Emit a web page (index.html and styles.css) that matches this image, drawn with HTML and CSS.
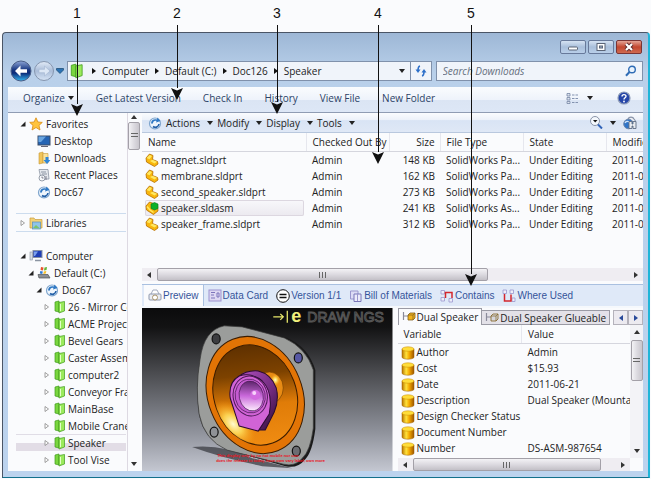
FILE: index.html
```html
<!DOCTYPE html>
<html lang="en">
<head>
<meta charset="utf-8">
<meta name="viewport" content="width=device-width, initial-scale=1">
<title>Speaker</title>
<link rel="stylesheet" href="styles.css">
</head>
<body>

<!-- shared icons -->
<svg class="sprite" aria-hidden="true">
  <defs>
    <linearGradient id="gold" x1="0" x2="1" y1="0" y2="0">
      <stop offset="0" stop-color="#b87400"/><stop offset=".35" stop-color="#ffe23c"/><stop offset=".6" stop-color="#f5a800"/><stop offset="1" stop-color="#9c5600"/>
    </linearGradient>
    <linearGradient id="back" x1="0" x2="0" y1="0" y2="1">
      <stop offset="0" stop-color="#8fa6d8"/><stop offset=".45" stop-color="#16357f"/><stop offset=".6" stop-color="#0b2a78"/><stop offset="1" stop-color="#35b6ef"/>
    </linearGradient>
    <linearGradient id="fwd" x1="0" x2="0" y1="0" y2="1">
      <stop offset="0" stop-color="#e2ebf7"/><stop offset=".5" stop-color="#a9bcd8"/><stop offset="1" stop-color="#d6e4f5"/>
    </linearGradient>
    <symbol id="part" viewBox="0 0 14 14">
      <path d="M1 5 4.500 1 8 2.500 7.500 6.500 12.500 8.500 13 11 9.500 13.500 1.500 9z" fill="#f9b70c" stroke="#b56d00" stroke-width=".8"/>
      <path d="M1.500 5 4.700 2 7 3 4.500 6.200zM5 8 7.500 6.800 12 8.800 9.500 10.500z" fill="#ffe861"/>
    </symbol>
    <symbol id="asm" viewBox="0 0 14 14">
      <path d="M1 5 4.500 1 12.500 4 13 10 8.500 13.500 1.500 9z" fill="#f9b70c" stroke="#b56d00" stroke-width=".8"/>
      <path d="M2 5.500 5 9 8.500 11.500" fill="none" stroke="#ffe861" stroke-width="1.500"/>
      <path d="M6 3 9.500 1.500 13 3V7.500L9.500 9 6 7.500z" fill="#0bb02a" stroke="#067a1c" stroke-width=".6"/>
    </symbol>
    <symbol id="folder" viewBox="0 0 12 14">
      <path d="M1 2 5 1V12L1 11z" fill="#79d63e" stroke="#3f9a1c" stroke-width=".7"/>
      <path d="M5 2.500 10.500 1.500V11L5 13z" fill="#9bea5c" stroke="#3f9a1c" stroke-width=".7"/>
      <path d="M6.500 4V11" stroke="#e2ffc8"/>
    </symbol>
    <symbol id="vault" viewBox="0 0 14 14">
      <circle cx="7" cy="7.500" r="5.500" fill="#eef5fc" stroke="#7fa5cd" stroke-width="1.200"/>
      <path d="M3 7.500C3 4 6 2.500 9 3.500L9.500 1.500 12.500 5 8 6.500 8.500 5C6.500 4.500 5 5.500 5 7.500z" fill="#2f78c4"/>
      <path d="M5 10.500C7 12 10.500 11.500 11 8" fill="none" stroke="#2460a8" stroke-width="1.600"/>
    </symbol>
    <symbol id="cyl" viewBox="0 0 14 14">
      <path d="M1 3V11.500C3 13.800 11 13.800 13 11.500V3z" fill="url(#gold)" stroke="#9c5c00" stroke-width=".5"/>
      <ellipse cx="7" cy="3" rx="6" ry="2.200" fill="#ffdd3a" stroke="#c98a00" stroke-width=".5"/>
    </symbol>
    <symbol id="open" viewBox="0 0 6 6"><path d="M5.500 .5V5.500H.5z" fill="#222"/></symbol>
    <symbol id="closed" viewBox="0 0 6 6"><path d="M1 .5 4.500 3 1 5.500z" fill="#fff" stroke="#888" stroke-width=".8"/></symbol>
    <symbol id="config" viewBox="0 0 14 12">
      <path d="M1.500 1V9M1.500 5H6" fill="none" stroke="#8a8a9a" stroke-width="1.200"/>
      <path d="M6 4 8 2H13V7L11 9H6z" fill="currentColor" stroke="#80601c" stroke-width=".8"/>
      <path d="M6 4H11V9M11 4 13 2" fill="none" stroke="#80601c" stroke-width=".7"/>
    </symbol>
  </defs>
</svg>

<div class="window">
  <header class="titlebar">
    <button type="button" class="win_button" aria-label="Minimize"><svg width="12" height="10" viewBox="0 0 12 10"><rect x="1.500" y="5" width="9" height="3" rx="1" fill="#fff" stroke="#5b6577"/></svg></button>
    <button type="button" class="win_button" aria-label="Maximize"><svg width="12" height="10" viewBox="0 0 12 10"><rect x="2" y="1.500" width="8" height="7" fill="#fff" stroke="#5b6577"/><rect x="4.500" y="4" width="3" height="2" fill="#9fb2cc" stroke="#5b6577"/></svg></button>
    <button type="button" class="win_button close" aria-label="Close"><svg width="12" height="10" viewBox="0 0 12 10"><path d="M3 2 9 8M9 2 3 8" stroke="#5e2a2a" stroke-width="4"/><path d="M3 2 9 8M9 2 3 8" stroke="#fff" stroke-width="2.200"/></svg></button>
  </header>

  <nav class="navbar">
    <div class="history">
      <button type="button" class="plain" aria-label="Back"><svg width="22" height="22" viewBox="0 0 22 22"><circle cx="11" cy="11" r="10" fill="url(#back)" stroke="#4a5d86"/><path d="M5 11 10.500 5.500V9.300H17V12.700H10.500V16.500z" fill="#fff"/></svg></button>
      <button type="button" class="plain" aria-label="Forward"><svg width="22" height="22" viewBox="0 0 22 22"><circle cx="11" cy="11" r="9.500" fill="url(#fwd)" stroke="#8595ae"/><path d="M17 11 11.500 6V9.300H6V12.700H11.500V16z" fill="#dce7f5" stroke="#a3b5d0" stroke-width=".6"/></svg></button>
      <button type="button" class="plain" aria-label="Recent locations"><svg width="8" height="6" viewBox="0 0 8 6"><path d="M.5 .5H7.500V2L4 5.500 .5 2z" fill="#2b72b4" stroke="#16456f" stroke-width=".7"/></svg></button>
    </div>
    <div class="address">
      <svg width="14" height="16"><use href="#folder"/></svg>
      <i class="crumb_arrow"></i><a href="#">Computer</a>
      <i class="crumb_arrow"></i><a href="#">Default (C:)</a>
      <i class="crumb_arrow"></i><a href="#">Doc126</a>
      <i class="crumb_arrow"></i><a href="#">Speaker</a>
      <i class="caret address_caret"></i>
      <button type="button" class="plain refresh" aria-label="Refresh"><svg width="12" height="12" viewBox="0 0 12 12"><path d="M5 1C3 1.500 3 3 3 5" fill="none" stroke="#2c6fc9" stroke-width="1.500"/><path d="M.5 4.500H5.500L3 8z" fill="#2c6fc9"/><path d="M7 11C9 10.500 9 9 9 7" fill="none" stroke="#2c6fc9" stroke-width="1.500"/><path d="M6.500 7.500H11.500L9 4z" fill="#2c6fc9"/></svg></button>
    </div>
    <div class="search">
      <input type="text" placeholder="Search Downloads" aria-label="Search Downloads">
      <svg width="12" height="12" viewBox="0 0 12 12"><circle cx="7" cy="4.500" r="3.300" fill="#e9f3fd" stroke="#2f6cb5" stroke-width="1.400"/><path d="M4.500 7 1 10.800" stroke="#2f6cb5" stroke-width="2"/></svg>
    </div>
  </nav>

  <div class="content">
    <div class="toolbar">
      <button type="button" class="plain organize">Organize <i class="caret"></i></button>
      <button type="button" class="plain">Get Latest Version</button>
      <button type="button" class="plain">Check In</button>
      <button type="button" class="plain">History</button>
      <button type="button" class="plain">View File</button>
      <button type="button" class="plain">New Folder</button>
      <span class="toolbar_right">
        <button type="button" class="plain views" aria-label="Change view"><svg width="13" height="11" viewBox="0 0 13 11"><path d="M1 .5H4V3H1zM1 4.500H4V7H1zM1 8.500H4V10.500H1z" fill="#dde4f0" stroke="#7687a5" stroke-width=".8"/><path d="M6 2H12M6 5.500H12M6 9.500H12" stroke="#8393b0" stroke-dasharray="2.500 1"/></svg><i class="caret"></i></button>
        <button type="button" class="plain" aria-label="Help"><svg width="14" height="14" viewBox="0 0 14 14"><circle cx="7" cy="7" r="6" fill="#2545a8" stroke="#8d9bb8" stroke-width="1.200"/><path d="M5 5.500C5 3 9 3 9 5.300 9 6.800 7 6.800 7 8.500" fill="none" stroke="#fff" stroke-width="1.400"/><circle cx="7" cy="10.500" r=".9" fill="#fff"/></svg></button>
      </span>
    </div>

    <div class="panes">
      <aside class="sidebar">
        <ul class="tree">
          <li><svg class="twist"><use href="#open"/></svg><svg class="icon" viewBox="0 0 14 14"><path d="M7 .8 8.900 5 13.300 5.400 10 8.400 11 13 7 10.500 3 13 4 8.400 .7 5.400 5.100 5z" fill="#ffc33c" stroke="#d98a12" stroke-width=".8"/></svg>Favorites</li>
          <li class="lvl2 leaf"><svg class="icon" viewBox="0 0 14 14"><rect x="1" y="2" width="12" height="9" fill="#2464b4" stroke="#3a4d68"/><path d="M1.500 2.500H9L4 8H1.500z" fill="#69a5e0"/><path d="M4 12.500H11" stroke="#667"/></svg>Desktop</li>
          <li class="lvl2 leaf"><svg class="icon" viewBox="0 0 14 14"><path d="M2 2 6 1V12L2 13z" fill="#f1c559" stroke="#c6993a" stroke-width=".6"/><path d="M6 2.500H11V12H6z" fill="#fbe39a" stroke="#c6993a" stroke-width=".6"/><path d="M8.500 6H11.500V9H13.500L10 13 6.500 9H8.500z" fill="#2f86d8"/></svg>Downloads</li>
          <li class="lvl2 leaf"><svg class="icon" viewBox="0 0 14 14"><path d="M2 1.500H11L12 11H4z" fill="#e6e9ee" stroke="#8b94a2" stroke-width=".8"/><path d="M4 4H9M5 6H10" stroke="#8b94a2"/><circle cx="5" cy="10" r="3" fill="#f7f9fb" stroke="#7d8796" stroke-width=".8"/><path d="M5 8.500V10H6.500M9 8V12" fill="none" stroke="#667" stroke-width=".8"/></svg>Recent Places</li>
          <li class="lvl2 leaf"><svg class="icon"><use href="#vault"/></svg>Doc67</li>
        </ul>
        <ul class="tree libraries">
          <li><svg class="twist"><use href="#closed"/></svg><svg class="icon" viewBox="0 0 14 14"><path d="M1 2H5L6 3.500H13V12H1z" fill="#f3d277" stroke="#c79c3d" stroke-width=".7"/><rect x="3.500" y="6" width="8" height="7" fill="#8fc4ea" stroke="#5b8fb8" stroke-width=".7"/><path d="M4 12 7 9 11 12.500z" fill="#7cc46a"/></svg>Libraries</li>
        </ul>
        <ul class="tree">
          <li><svg class="twist"><use href="#open"/></svg><svg class="icon" viewBox="0 0 14 14"><rect x="4" y="1.500" width="9" height="7" fill="#1f3fb5" stroke="#8792a5"/><path d="M5 2.500H9L6 7H5z" fill="#7aa0ee"/><rect x="1" y="3" width="2.500" height="8" fill="#d5dae2" stroke="#8b94a2" stroke-width=".6"/><path d="M6 11.500H12" stroke="#8b94a2" stroke-width="1.500"/></svg>Computer</li>
          <li class="lvl2"><svg class="twist"><use href="#open"/></svg><svg class="icon" viewBox="0 0 14 14"><path d="M1 8.500H11L13 12H2z" fill="#8d8f93" stroke="#4f5358" stroke-width=".7"/><path d="M4 1 6.500 1.500 6 4.500 3.500 4z" fill="#e8512c"/><path d="M7.500 1.500 10 1 9.500 4 7 4.500z" fill="#63b537"/><path d="M3.300 5 5.800 5.500 5.300 8 2.800 7.500z" fill="#2f7bd6"/><path d="M6.800 5.500 9.300 5 8.800 7.500 6.300 8z" fill="#f7bf26"/></svg>Default (C:)</li>
          <li class="lvl3"><svg class="twist"><use href="#open"/></svg><svg class="icon"><use href="#vault"/></svg>Doc67</li>
          <li class="lvl4"><svg class="twist"><use href="#closed"/></svg><svg class="icon"><use href="#folder"/></svg>26 - Mirror Co</li>
          <li class="lvl4"><svg class="twist"><use href="#closed"/></svg><svg class="icon"><use href="#folder"/></svg>ACME Project</li>
          <li class="lvl4"><svg class="twist"><use href="#closed"/></svg><svg class="icon"><use href="#folder"/></svg>Bevel Gears</li>
          <li class="lvl4"><svg class="twist"><use href="#closed"/></svg><svg class="icon"><use href="#folder"/></svg>Caster Assem</li>
          <li class="lvl4"><svg class="twist"><use href="#closed"/></svg><svg class="icon"><use href="#folder"/></svg>computer2</li>
          <li class="lvl4"><svg class="twist"><use href="#closed"/></svg><svg class="icon"><use href="#folder"/></svg>Conveyor Fra</li>
          <li class="lvl4"><svg class="twist"><use href="#closed"/></svg><svg class="icon"><use href="#folder"/></svg>MainBase</li>
          <li class="lvl4"><svg class="twist"><use href="#closed"/></svg><svg class="icon"><use href="#folder"/></svg>Mobile Crane</li>
          <li class="lvl4 selected"><svg class="twist"><use href="#closed"/></svg><svg class="icon"><use href="#folder"/></svg>Speaker</li>
          <li class="lvl4"><svg class="twist"><use href="#closed"/></svg><svg class="icon"><use href="#folder"/></svg>Tool Vise</li>
        </ul>
      </aside>
      <div class="vscroll side_scroll">
        <i class="arrow up"></i><span class="thumb"></span><i class="arrow down"></i>
      </div>

      <main class="main">
        <div class="menubar">
          <svg class="icon"><use href="#vault"/></svg>
          <button type="button" class="plain">Actions <i class="caret"></i></button>
          <button type="button" class="plain">Modify <i class="caret"></i></button>
          <button type="button" class="plain">Display <i class="caret"></i></button>
          <button type="button" class="plain">Tools <i class="caret"></i></button>
          <span class="menubar_right">
            <button type="button" class="plain find" aria-label="Search tool"><svg width="14" height="13" viewBox="0 0 14 13"><circle cx="6" cy="5" r="4.500" fill="#f4f8fd" stroke="#8a94a8"/><path d="M4 4H8.500L6.200 6.500z" fill="#111"/><path d="M9 8.500 13 12.500" stroke="#2f62b8" stroke-width="2"/></svg><i class="caret"></i></button>
            <button type="button" class="plain" aria-label="Vault view"><svg width="14" height="14" viewBox="0 0 14 14"><path d="M5 5V3C6 .5 10 .5 11 3L12.500 5" fill="#eef1f6" stroke="#8a94a8" stroke-width="1.200"/><circle cx="5.500" cy="8" r="4.800" fill="#2f74c8" stroke="#6f88aa"/><path d="M2 7C3 5 5 5 6 6" fill="none" stroke="#cfe4fa" stroke-width="1.200"/><path d="M6 5.500H9V8H10V5.500H13V12.500H10V10H9V12.500H6z" fill="#e7ebf1" stroke="#5f6d85" stroke-width=".9"/></svg></button>
          </span>
        </div>

        <div class="files_wrap">
          <table class="files">
            <colgroup><col class="c_name"><col class="c_type"><col class="c_size"><col class="c_type"><col class="c_type"><col class="c_type"></colgroup>
            <thead>
              <tr><th>Name</th><th>Checked Out By</th><th class="num">Size</th><th>File Type</th><th>State</th><th>Modified</th></tr>
            </thead>
            <tbody>
              <tr><td><span class="file"><svg class="icon"><use href="#part"/></svg>magnet.sldprt</span></td><td>Admin</td><td class="num">148 KB</td><td>SolidWorks Pa...</td><td>Under Editing</td><td>2011-06-21</td></tr>
              <tr><td><span class="file"><svg class="icon"><use href="#part"/></svg>membrane.sldprt</span></td><td>Admin</td><td class="num">162 KB</td><td>SolidWorks Pa...</td><td>Under Editing</td><td>2011-06-21</td></tr>
              <tr><td><span class="file"><svg class="icon"><use href="#part"/></svg>second_speaker.sldprt</span></td><td>Admin</td><td class="num">273 KB</td><td>SolidWorks Pa...</td><td>Under Editing</td><td>2011-06-21</td></tr>
              <tr><td><span class="file picked"><svg class="icon"><use href="#asm"/></svg>speaker.sldasm</span></td><td>Admin</td><td class="num">241 KB</td><td>SolidWorks As...</td><td>Under Editing</td><td>2011-06-21</td></tr>
              <tr><td><span class="file"><svg class="icon"><use href="#part"/></svg>speaker_frame.sldprt</span></td><td>Admin</td><td class="num">312 KB</td><td>SolidWorks Pa...</td><td>Under Editing</td><td>2011-06-21</td></tr>
            </tbody>
          </table>
        </div>
        <div class="hscroll files_scroll"><i class="arrow left"></i><span class="thumb"></span><i class="arrow right"></i></div>

        <div class="tabs">
          <button type="button" class="plain tab active"><svg class="icon" viewBox="0 0 14 14"><path d="M3 5 5 1H9L11 5" fill="#fff" stroke="#9aa3b8" stroke-width=".9"/><rect x="1" y="5" width="12" height="6" rx="1" fill="#e9ecf2" stroke="#8f98ad"/><circle cx="7" cy="8.500" r="2.500" fill="#fff" stroke="#a08a5c" stroke-width=".9"/></svg>Preview</button>
          <button type="button" class="plain tab"><svg class="icon" viewBox="0 0 14 14"><rect x="1" y="1" width="12" height="11" fill="#ded8f2" stroke="#9c93cf"/><path d="M3 3.500H7M3 6H6M3 9H7M9 4H11V8H9z" fill="none" stroke="#7c74bb"/></svg>Data Card</button>
          <button type="button" class="plain tab"><svg class="icon" viewBox="0 0 14 14"><circle cx="7" cy="7" r="6.300" fill="#fff" stroke="#111"/><path d="M3.500 5.500H10.500M3.500 8.500H10.500" stroke="#111" stroke-width="1.300"/></svg>Version 1/1</button>
          <button type="button" class="plain tab"><svg class="icon" viewBox="0 0 14 14"><path d="M1.500 2H9V10H1.500z" fill="#dcdcf5" stroke="#9a97ce"/><path d="M5 5H12V12.500H5z" fill="#ececfb" stroke="#7976b8"/><path d="M8.500 5V12" stroke="#9a97ce"/></svg>Bill of Materials</button>
          <button type="button" class="plain tab"><svg class="icon" viewBox="0 0 14 14"><path d="M1 1.500H4.500V5H1zM1 8.500H4.500V12H1zM9 9.500H12.500V13H9z" fill="#eeeefa" stroke="#a19fd2" stroke-width=".9"/><path d="M5.500 9V3.500H12V9" fill="none" stroke="#d4262c" stroke-width="1.500"/></svg>Contains</button>
          <button type="button" class="plain tab"><svg class="icon" viewBox="0 0 14 14"><path d="M1 1H4.500V4.500H1zM8 1H11.500V4.500H8zM10 9H13V12.500H10z" fill="#eeeefa" stroke="#a19fd2" stroke-width=".9"/><path d="M2.500 5V12H9V5.500" fill="none" stroke="#d4262c" stroke-width="1.500"/></svg>Where Used</button>
        </div>

        <div class="detail">
          <svg class="preview" viewBox="0 0 250 163" preserveAspectRatio="xMidYMid slice" role="img" aria-label="Speaker model">
            <defs>
              <linearGradient id="sky" x1="0" x2="0" y1="0" y2="1"><stop offset="0" stop-color="#0b0b0c"/><stop offset=".12" stop-color="#131314"/><stop offset=".4" stop-color="#4b4c50"/><stop offset=".75" stop-color="#8d9099"/><stop offset="1" stop-color="#c4c7d1"/></linearGradient>
              <linearGradient id="cone" x1=".6" x2=".4" y1="0" y2="1"><stop offset="0" stop-color="#5e3000"/><stop offset=".3" stop-color="#7d4200"/><stop offset=".6" stop-color="#e07c08"/><stop offset="1" stop-color="#f08c12"/></linearGradient>
              <radialGradient id="glow"><stop offset="0" stop-color="#fffbd0"/><stop offset=".4" stop-color="#ffdf5c" stop-opacity=".85"/><stop offset="1" stop-color="#f59a10" stop-opacity="0"/></radialGradient>
              <linearGradient id="side" x1="0" x2="1" y1="0" y2="1"><stop offset="0" stop-color="#b14fc0"/><stop offset=".6" stop-color="#6f2a7c"/><stop offset="1" stop-color="#2b0b32"/></linearGradient>
              <linearGradient id="bowl" x1=".6" x2=".4" y1="0" y2="1"><stop offset="0" stop-color="#5a2468"/><stop offset=".5" stop-color="#c968da"/><stop offset="1" stop-color="#fff0ff"/></linearGradient>
              <clipPath id="conearea"><ellipse cx="113" cy="87" rx="41" ry="51" transform="rotate(-20 113 87)"/></clipPath>
            </defs>
            <rect width="250" height="163" fill="url(#sky)"/>
            <path d="M50 139Q80 136 110 150L150 160 120 158Q80 150 50 139z" fill="#33343a" opacity=".7"/>
            <path d="M86 17 103 19 145 30Q166 39 173 62V121Q170 144 163 151 155 161 143 158L86 142Q62 132 57 107 53 80 58 51 66 19 86 17z" fill="#1a1a1a"/>
            <path d="M82 18 100 19 142 30Q164 40 171 62V120Q168 143 160 150 153 159 141 156L85 142Q62 132 57 106 53 80 58 51 62 22 82 18z" fill="#9b9d9b" stroke="#3a3a3a" stroke-width=".7"/>
            <g stroke="#111" stroke-width="1.200">
              <ellipse cx="74" cy="31" rx="4" ry="5" fill="#3c3d40"/>
              <ellipse cx="156" cy="50" rx="4" ry="5" fill="#5758a4"/>
              <ellipse cx="72" cy="124" rx="4" ry="5" fill="#8f9296"/>
              <ellipse cx="154" cy="143" rx="4" ry="5" fill="#6b6d72"/>
            </g>
            <ellipse cx="113" cy="87" rx="47" ry="60" transform="rotate(-22 113 87)" fill="#e27405" stroke="#3a1c00"/>
            <ellipse cx="113" cy="87" rx="41" ry="51" transform="rotate(-20 113 87)" fill="url(#cone)" stroke="#3a1c00"/>
            <g clip-path="url(#conearea)"><ellipse cx="91" cy="116" rx="28" ry="17" transform="rotate(48 91 116)" fill="url(#glow)"/></g>
            <ellipse cx="127" cy="80" rx="14" ry="16" fill="#e88b14" stroke="#7a4200" stroke-width=".7"/>
            <ellipse cx="133" cy="72" rx="5" ry="6" fill="url(#glow)"/>
            <path d="M96 69Q104 62 116 63 129 66 134 80 137 92 132 104L123 122 116 122z" fill="url(#side)" stroke="#2b0b32"/>
            <path d="M88 90Q86 74 97 68 109 64 120 73 129 82 128 98L127 106 116 123 97 118z" fill="#d163d6" stroke="#2b0b32"/>
            <ellipse cx="108" cy="88" rx="17" ry="20" transform="rotate(-12 108 88)" fill="none" stroke="#4d1a58"/>
            <ellipse cx="108" cy="88" rx="15" ry="17" transform="rotate(-12 108 88)" fill="#c45bd0" stroke="#4d1a58" stroke-width=".7"/>
            <ellipse cx="109" cy="88" rx="12" ry="15" transform="rotate(-12 109 88)" fill="url(#bowl)" stroke="#4d1a58" stroke-width=".7"/>
            <circle cx="113" cy="87" r="5" fill="#d36be0"/><circle cx="112" cy="85" r="2" fill="#f7d3fb"/>
            <path d="M131 9H141M138 6 141 9 138 12M145 3V15" fill="none" stroke="#e6e66a" stroke-width="1.300"/>
            <text class="logo_e" x="149" y="14">e</text>
            <text class="logo" x="165" y="14">DRAW NGS</text>
            <text class="note" x="75" y="149">This display only by no not mobile nor con</text>
            <text class="note" x="74" y="154">does the release to today, have own vary label, own more</text>
          </svg>

          <section class="props">
            <div class="prop_tabs">
              <button type="button" class="plain prop_tab on"><svg class="icon"><use href="#config"/></svg>Dual Speaker</button>
              <button type="button" class="plain prop_tab"><svg class="icon dim"><use href="#config"/></svg>Dual Speaker Glueable</button>
              <span class="prop_nav">
                <button type="button" aria-label="Previous tab"><i class="arrow left"></i></button>
                <button type="button" aria-label="Next tab"><i class="arrow right"></i></button>
              </span>
            </div>
            <div class="prop_body">
              <div class="prop_view">
                <table class="prop_table">
                  <thead><tr><th>Variable</th><th>Value</th></tr></thead>
                  <tbody>
                    <tr><td><svg class="icon"><use href="#cyl"/></svg>Author</td><td>Admin</td></tr>
                    <tr><td><svg class="icon"><use href="#cyl"/></svg>Cost</td><td>$15.93</td></tr>
                    <tr><td><svg class="icon"><use href="#cyl"/></svg>Date</td><td>2011-06-21</td></tr>
                    <tr><td><svg class="icon"><use href="#cyl"/></svg>Description</td><td>Dual Speaker (Mountable)</td></tr>
                    <tr><td><svg class="icon"><use href="#cyl"/></svg>Design Checker Status</td><td></td></tr>
                    <tr><td><svg class="icon"><use href="#cyl"/></svg>Document Number</td><td></td></tr>
                    <tr><td><svg class="icon"><use href="#cyl"/></svg>Number</td><td>DS-ASM-987654</td></tr>
                    <tr><td><svg class="icon"><use href="#cyl"/></svg></td><td></td></tr>
                  </tbody>
                </table>
              </div>
              <div class="vscroll prop_vscroll"><i class="arrow up"></i><span class="thumb"></span><i class="arrow down"></i></div>
            </div>
            <div class="hscroll prop_hscroll"><i class="arrow left"></i><span class="thumb"></span><i class="arrow right"></i></div>
          </section>
        </div>
      </main>
    </div>
  </div>
</div>

<!-- numbered callouts over the window -->
<div class="callout one">1<i></i></div>
<div class="callout two">2<i></i></div>
<div class="callout three">3<i></i></div>
<div class="callout four">4<i></i></div>
<div class="callout five">5<i></i></div>

</body>
</html>
```

FILE: styles.css
```css
* { box-sizing: border-box; }

body {
    display: flex;
    height: 100vh;
    margin: 0;
    padding: 32px 1px 1px 2px;
    background-color: #fafbfd;
    font: 10px/16px "Open Sans", "Noto Sans", sans-serif;
    color: #222;
}

ul { list-style: none; margin: 0; padding: 0; }
a { color: inherit; text-decoration: none; }

.sprite { position: absolute; width: 0; height: 0; }

.plain {
    display: flex;
    align-items: center;
    border: none;
    padding: 0;
    background: none;
    font: inherit;
    color: inherit;
    white-space: nowrap;
}

.icon {
    flex: none;
    width: 14px;
    height: 14px;
}

.caret {
    border: 3px solid transparent;
    border-top: 4px solid #222;
    border-bottom: none;
}

/* window frame */
.window {
    display: flex;
    flex-direction: column;
    flex: 1;
    min-width: 0;
    padding: 0 5px 6px;
    border: 1px solid #4a5566;
    border-right: 2px solid #1fb5d8;
    border-bottom-color: #12708c;
    border-radius: 4px 4px 0 0;
    background: linear-gradient(#9db7d6, #b9d0ea 40px, #bcd3ee);
}

.titlebar {
    display: flex;
    justify-content: flex-end;
    gap: 2px;
    height: 28px;
    padding: 7px 1px 0;
}
.win_button {
    display: flex;
    align-items: center;
    justify-content: center;
    width: 26px;
    height: 14px;
    padding: 0;
    border: 1px solid #67799a;
    border-radius: 2px;
    background: linear-gradient(#d5e2f2, #a9bfdb 50%, #b9cfe9);
}
.close {
    border-color: #7a3434;
    background: linear-gradient(#e3a495, #c3472f 50%, #cf6a50);
}

.navbar {
    display: flex;
    gap: 4px;
    height: 20px;
    padding-left: 2px;
}
.history {
    display: flex;
    align-items: center;
    gap: 1px;
    width: 53px;
}
.address {
    display: flex;
    flex: 65;
    align-items: center;
    border: 1px solid #8091ab;
    background-color: #f0f4fa;
    padding-left: 2px;
}
.crumb_arrow {
    margin: 0 6px;
    border: 3px solid transparent;
    border-left: 4px solid #111;
    border-right: none;
}
svg + .crumb_arrow { margin-left: 8px; }
.address_caret { margin: 0 5px 0 auto; }
.refresh {
    align-self: stretch;
    padding: 0 4px;
    border-left: 1px solid #8091ab;
}
.search {
    display: flex;
    flex: 35;
    align-items: center;
    padding: 0 5px 0 6px;
    border: 1px solid #8091ab;
    background-color: #f0f4fa;
}
.search input {
    flex: 1;
    min-width: 0;
    padding: 0;
    border: none;
    outline: none;
    background: none;
    font: italic 10px "Open Sans", sans-serif;
}
.search input::placeholder { color: #66707e; }

.content {
    display: flex;
    flex-direction: column;
    flex: 1;
    min-height: 0;
    margin-top: 6px;
}

.toolbar {
    display: flex;
    align-items: center;
    gap: 22px;
    height: 26px;
    padding: 0 12px 3px 15px;
    border-bottom: 1px solid #8f9cb3;
    background: linear-gradient(#fafcfe, #eef3fb 50%, #dbe5f4 52%, #dde7f6);
    color: #2c4266;
}
.organize { gap: 3px; }
.toolbar_right {
    display: flex;
    gap: 24px;
    margin-left: auto;
}
.views { gap: 8px; }

.panes {
    display: flex;
    flex: 1;
    min-height: 0;
    background-color: #fafbfd;
}

/* folder tree */
.sidebar {
    width: 119px;
    padding: 2px 1px 0 8px;
    overflow: hidden;
}
.tree li {
    display: flex;
    align-items: center;
    height: 17px;
    padding-left: 4px;
    white-space: nowrap;
}
.tree .icon { margin: 0 3px; }
.twist { flex: none; width: 6px; height: 6px; }
.tree .lvl2 { padding-left: 12px; }
.tree .lvl3 { padding-left: 20px; }
.tree .lvl4 { padding-left: 28px; }
.tree .lvl4 .icon { margin-right: 1px; }
.tree .leaf { padding-left: 18px; }
.libraries {
    margin: 13px 0 15px;
    border-top: 1px solid #ccdcee;
    border-bottom: 1px solid #ccdcee;
}
.selected {
    border-top: 1px solid #e0dde6;
    background: linear-gradient(#fafbfd 50%, #e2dde6 52%);
}

/* scroll bars */
.arrow { border: 3px solid transparent; }
.arrow.up { border-bottom: 4px solid #333; border-top: none; }
.arrow.down { border-top: 4px solid #333; border-bottom: none; }
.arrow.left { border-right: 4px solid #333; border-left: none; }
.arrow.right { border-left: 4px solid #333; border-right: none; }

.vscroll {
    display: flex;
    flex-direction: column;
    align-items: center;
    flex: none;
    width: 13px;
    padding: 5px 0;
    background-color: #f3f3f7;
}
.hscroll {
    display: flex;
    align-items: center;
    flex: none;
    height: 13px;
    padding: 0 5px;
    background-color: #efedf2;
}
.thumb {
    display: flex;
    align-items: center;
    justify-content: center;
    border: 1px solid #a3a0a8;
    border-radius: 2px;
}
.thumb::after {
    content: "";
    width: 7px;
    height: 6px;
    background: repeating-linear-gradient(90deg, #666 0 1px, transparent 1px 3px);
}
.vscroll .thumb {
    width: 12px;
    background: linear-gradient(90deg, #f3f2f5, #dcdae0 50%, #c9c6cd);
}
.vscroll .thumb::after { background: repeating-linear-gradient(#666 0 1px, transparent 1px 3px); }
.hscroll .thumb {
    height: 13px;
    background: linear-gradient(#f3f2f5, #dcdae0 50%, #c3c0c7);
}
.vscroll .down { margin-top: auto; }
.hscroll .right { margin-left: auto; }

.side_scroll {
    border-left: 1px solid #ddd9e2;
    padding: 2px 0 5px;
    background-color: #fafbfd;
}
.side_scroll .thumb { height: 28px; margin-top: 3px; }

/* file list */
.main {
    display: flex;
    flex-direction: column;
    flex: 1;
    min-width: 0;
    margin-left: 2px;
}
.menubar {
    display: flex;
    align-items: center;
    gap: 4px;
    flex: none;
    height: 20px;
    padding: 0 6px 0 6px;
    border-bottom: 1px solid #b9c8de;
    background: linear-gradient(#fafcfe, #edf2fa 35%, #d9e4f5 40%, #dfe8f6);
}
.menubar .plain { gap: 7px; }
.menubar_right { display: flex; gap: 7px; margin-left: auto; }

.files_wrap { flex: 1; overflow: hidden; }
.files, .prop_table {
    width: 100%;
    border-collapse: collapse;
    table-layout: fixed;
}
.c_name { width: 164px; }
.c_type { width: 83px; }
.c_size { width: 51px; }
th, td {
    height: 16px;
    padding: 0 0 0 6px;
    overflow: hidden;
    font-weight: normal;
    text-align: left;
    white-space: nowrap;
}
th {
    height: 18px;
    border-bottom: 1px solid #d5d6de;
    border-right: 1px solid #e6e7ee;
}
.files { width: 547px; }
.files .num { padding: 0 5px 0 0; text-align: right; }
.files td:first-child { padding-left: 3px; }
.file {
    display: flex;
    align-items: center;
    gap: 2px;
    height: 16px;
    margin-right: 2px;
}
.picked {
    border-radius: 2px;
    background: linear-gradient(#f8f8fb, #ebe9ef);
    box-shadow: inset 0 0 0 1px #dcd7e0;
}
.files_scroll .thumb { flex: 0 1 331px; margin-left: 6px; }

/* lower tabs */
.tabs {
    display: flex;
    flex: none;
    height: 24px;
    margin-top: 3px;
    padding-left: 2px;
    border-top: 1px solid #a9c0e0;
    border-bottom: 2px solid #f5f8fc;
    background-color: #dfe9f8;
    color: #35549a;
    font: 10px "Liberation Sans", sans-serif;
}
.tab {
    gap: 1px;
    padding: 0 4px;
}
.tab.active {
    border-right: 1px solid #a9c0e0;
    background-color: #fafbfd;
}

.detail {
    display: flex;
    gap: 5px;
    flex: none;
    height: 163px;
}
.preview {
    flex: 50;
    min-width: 0;
    height: 100%;
}
.logo_e { font: bold 18px "Liberation Sans", sans-serif; fill: #f2f07c; }
.logo { font: 14px "Liberation Sans", sans-serif; fill: #1a1a1a; stroke: #555; stroke-width: 1px; }
.note { font: bold 4px "Liberation Sans", sans-serif; fill: #e8121c; }

/* variables panel */
.props {
    display: flex;
    flex-direction: column;
    flex: 49;
    min-width: 0;
}
.prop_tabs {
    display: flex;
    align-items: flex-end;
    height: 17px;
    background-color: #fafbfd;
}
.prop_tab {
    height: 15px;
    gap: 1px;
    padding: 0 3px;
    border: 1px solid #9a9aa4;
    border-left: none;
    background-color: #e3e1e8;
}
.prop_tab.on {
    height: 17px;
    border-left: 1px solid #9a9aa4;
    border-bottom: none;
    background-color: #fafbfd;
}
.prop_tab .icon { color: #f2b21c; }
.prop_tab .dim { color: #d6d6dd; }
.prop_nav { display: flex; margin-left: auto; }
.prop_nav button {
    display: flex;
    align-items: center;
    justify-content: center;
    width: 15px;
    height: 15px;
    padding: 0;
    border: 1px solid #b4b2bb;
    background-color: #eceaf0;
}
.prop_nav .left { border-right-color: #2a4a9a; }
.prop_nav .right { border-left-color: #2a4a9a; }
.prop_body {
    display: flex;
    flex: 1;
    min-height: 0;
}
.prop_view { flex: 1; overflow: hidden; }
.prop_table th:first-child { width: 124px; }
.prop_table th:last-child { border-right: none; }
.prop_table td:first-child { padding-left: 3px; }
.prop_table .icon { margin: -2px 2px -2px 0; vertical-align: middle; }
.prop_vscroll .thumb { height: 41px; margin-top: 6px; }
.prop_hscroll { margin-right: 13px; }
.prop_hscroll .thumb { flex: 0 1 188px; margin-left: 6px; }

/* callouts */
.callout {
    position: absolute;
    top: 5px;
    display: flex;
    flex-direction: column;
    align-items: center;
    width: 12px;
    font: 14px/16px "Liberation Sans", sans-serif;
    color: #111;
}
.callout i {
    width: 1px;
    margin-top: 4px;
    background-color: #111;
}
.callout::after {
    content: "";
    width: 12px;
    height: 12px;
    background-color: #111;
    clip-path: polygon(0 0, 50% 20%, 100% 0, 50% 100%);
}
.one { left: 71px; }
.one i { height: 79px; }
.two { left: 171px; }
.two i { height: 63px; }
.three { left: 271px; }
.three i { height: 77px; }
.four { left: 372px; }
.four i { height: 127px; }
.five { left: 465px; }
.five i { height: 249px; }
```
